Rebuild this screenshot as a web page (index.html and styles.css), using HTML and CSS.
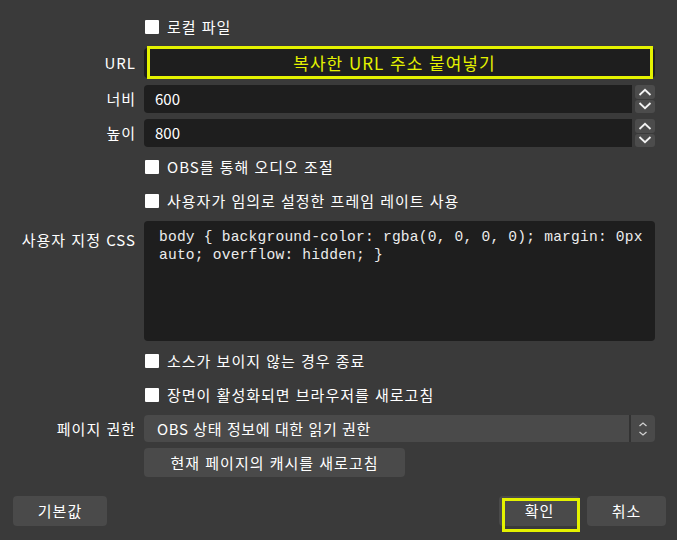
FILE: index.html
```html
<!DOCTYPE html>
<html lang="ko">
<head>
  <meta charset="UTF-8" />
  <title>브라우저 소스 속성</title>
  <link rel="stylesheet" href="styles.css">
</head>
<body>
  <div class="form">
    <div class="label"></div>
    <label class="check"><span class="box"></span>로컬 파일</label>

    <div class="label">URL</div>
    <div class="url-field">
      <div class="url-note">복사한 URL 주소 붙여넣기</div>
    </div>

    <div class="label">너비</div>
    <div class="spin">
      <div class="spin-value">600</div>
      <div class="spin-buttons">
        <div class="spin-btn"><svg width="14" height="8" viewBox="0 0 14 8"><path d="M1.5 7 L7 1.8 L12.5 7" /></svg></div>
        <div class="spin-btn"><svg width="14" height="8" viewBox="0 0 14 8"><path d="M1.5 1 L7 6.2 L12.5 1" /></svg></div>
      </div>
    </div>

    <div class="label">높이</div>
    <div class="spin">
      <div class="spin-value">800</div>
      <div class="spin-buttons">
        <div class="spin-btn"><svg width="14" height="8" viewBox="0 0 14 8"><path d="M1.5 7 L7 1.8 L12.5 7" /></svg></div>
        <div class="spin-btn"><svg width="14" height="8" viewBox="0 0 14 8"><path d="M1.5 1 L7 6.2 L12.5 1" /></svg></div>
      </div>
    </div>

    <div class="label"></div>
    <label class="check"><span class="box"></span>OBS를 통해 오디오 조절</label>

    <div class="label"></div>
    <label class="check"><span class="box"></span>사용자가 임의로 설정한 프레임 레이트 사용</label>

    <div class="label label-top">사용자 지정 CSS</div>
    <div class="code">body { background-color: rgba(0, 0, 0, 0); margin: 0px auto; overflow: hidden; }</div>

    <div class="label"></div>
    <label class="check"><span class="box"></span>소스가 보이지 않는 경우 종료</label>

    <div class="label"></div>
    <label class="check"><span class="box"></span>장면이 활성화되면 브라우저를 새로고침</label>

    <div class="label">페이지 권한</div>
    <div class="select">
      <div class="select-value">OBS 상태 정보에 대한 읽기 권한</div>
      <div class="select-arrow">
        <svg width="10" height="16" viewBox="0 0 10 16"><path d="M1.5 5 L5 2 L8.5 5" /><path d="M1.5 11 L5 14 L8.5 11" /></svg>
      </div>
    </div>

    <div class="label"></div>
    <div><button class="btn btn-refresh">현재 페이지의 캐시를 새로고침</button></div>
  </div>

  <div class="footer">
    <button class="btn btn-default">기본값</button>
    <div class="footer-right">
      <button class="btn btn-ok">확인</button>
      <button class="btn btn-cancel">취소</button>
    </div>
  </div>
</body>
</html>
```

FILE: styles.css
```css
:root {
  --bg: #3a3a3a;
  --field: #1e1e1e;
  --button: #4a4a4a;
  --text: #ffffff;
  --note: #e4f200;
}

* {
  box-sizing: border-box;
}

body {
  margin: 0;
  width: 677px;
  height: 540px;
  overflow: hidden;
  background: var(--bg);
  color: var(--text);
  font-family: "Noto Sans CJK KR", "Noto Sans", sans-serif;
  font-size: 15px;
  line-height: 20px;
  letter-spacing: 1px;
}

.form {
  display: grid;
  grid-template-columns: 122px 511px;
  grid-template-rows: 26px 33px 28px 28px 28px 28px 120px 28px 28px 27px 29px;
  column-gap: 9px;
  row-gap: 6px;
  padding: 14px 0 0 13px;
}

.label {
  text-align: right;
  align-self: center;
  margin-right: -1px;
}

.label-top {
  align-self: start;
  padding-top: 9px;
}

.check {
  display: flex;
  align-items: center;
  gap: 8px;
  padding-left: 1px;
}

.box {
  width: 14px;
  height: 14px;
  background: #fff;
  border-radius: 1px;
}

.url-field {
  position: relative;
  background: var(--field);
  border-radius: 4px;
  margin: 2px 0 1px;
}

.url-note {
  position: absolute;
  top: -2px;
  left: 3px;
  right: 2px;
  bottom: -1px;
  border: 3px solid var(--note);
  color: var(--note);
  font-size: 17px;
  display: flex;
  align-items: center;
  justify-content: center;
  padding-right: 11px;
}

.spin {
  display: flex;
  gap: 3px;
}

.spin-value {
  flex: 1;
  background: var(--field);
  border-radius: 4px 0 0 4px;
  padding-left: 11px;
  display: flex;
  align-items: center;
  letter-spacing: 0;
}

.spin-buttons {
  width: 20px;
  display: flex;
  flex-direction: column;
  gap: 1px;
}

.spin-btn {
  flex: 1;
  background: #4c4c4c;
  border-radius: 3px;
  display: flex;
  align-items: center;
  justify-content: center;
}

.spin-btn svg path,
.select-arrow svg path {
  fill: none;
  stroke: #f2f2f2;
  stroke-width: 1.8;
}

.code {
  background: var(--field);
  border-radius: 4px;
  padding: 7px 12px 0 15px;
  font-family: "Liberation Mono", monospace;
  font-size: 14.6px;
  line-height: 18px;
  letter-spacing: 0.2px;
  color: #ececec;
}

.select {
  display: flex;
  background: var(--button);
  border-radius: 4px;
}

.select-value {
  flex: 1;
  padding-left: 13px;
  display: flex;
  align-items: center;
  letter-spacing: 0.6px;
}

.select-arrow {
  width: 26px;
  border-left: 2px solid #333;
  display: flex;
  align-items: center;
  justify-content: center;
}

.select-arrow svg path {
  stroke: #cfcfcf;
  stroke-width: 1.3;
}

.btn {
  font: inherit;
  letter-spacing: inherit;
  color: var(--text);
  background: var(--button);
  border: none;
  border-radius: 4px;
  padding: 0;
  height: 30px;
}

.btn-refresh {
  width: 261px;
  height: 29px;
}

.footer {
  display: flex;
  justify-content: space-between;
  padding: 19px 11px 0 13px;
}

.footer-right {
  display: flex;
  gap: 7px;
}

.btn-default {
  width: 94px;
}

.btn-ok {
  position: relative;
  width: 81px;
}

.btn-ok::after {
  content: "";
  position: absolute;
  top: 2px;
  left: 3px;
  right: 0;
  bottom: -6px;
  border: 3px solid var(--note);
}

.btn-cancel {
  width: 79px;
}
```
